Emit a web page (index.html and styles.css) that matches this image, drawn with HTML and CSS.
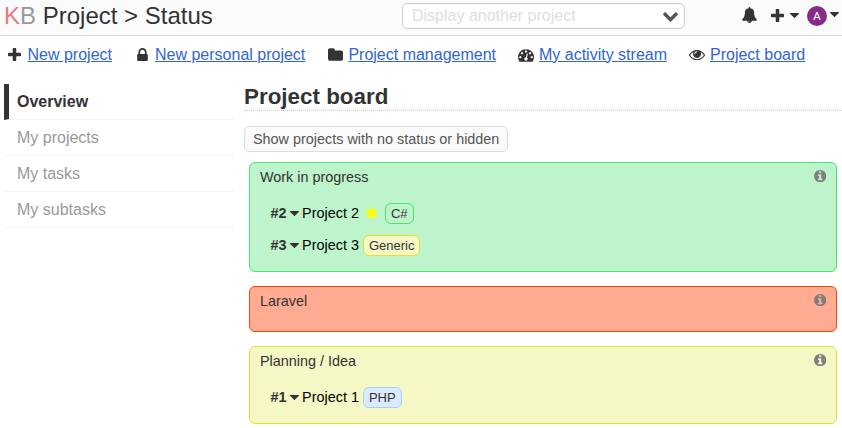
FILE: index.html
```html
<!DOCTYPE html>
<html lang="en">
<head>
<meta charset="utf-8">
<title>Project &gt; Status</title>
<link rel="stylesheet" href="styles.css">
</head>
<body>
<svg class="sprite" aria-hidden="true">
  <symbol id="plus" viewBox="192 128 1408 1408"><path d="M1600 736v192q0 40-28 68t-68 28h-416v416q0 40-28 68t-68 28h-192q-40 0-68-28t-28-68v-416h-416q-40 0-68-28t-28-68v-192q0-40 28-68t68-28h416v-416q0-40 28-68t68-28h192q40 0 68 28t28 68v416h416q40 0 68 28t28 68z"/></symbol>
  <symbol id="lock" viewBox="320 128 1152 1408"><path d="M640 768h512v-192q0-106-75-181t-181-75-181 75-75 181v192zm832 96v576q0 40-28 68t-68 28h-960q-40 0-68-28t-28-68v-576q0-40 28-68t68-28h32v-192q0-184 132-316t316-132 316 132 132 316v192h32q40 0 68 28t28 68z"/></symbol>
  <symbol id="folder" viewBox="64 128 1664 1408"><path d="M1728 608v704q0 92-66 158t-158 66h-1216q-92 0-158-66t-66-158v-960q0-92 66-158t158-66h320q92 0 158 66t66 158v32h672q92 0 158 66t66 158z"/></symbol>
  <symbol id="gauge" viewBox="0 256 1792 1408"><path d="M384 1152q0-53-37.5-90.5t-90.5-37.5-90.5 37.5-37.5 90.5 37.5 90.5 90.5 37.5 90.5-37.5 37.5-90.5zm192-448q0-53-37.5-90.5t-90.5-37.5-90.5 37.5-37.5 90.5 37.5 90.5 90.5 37.5 90.5-37.5 37.5-90.5zm428 481l101-382q6-26-7.500-48.500t-38.500-29.500-48 6.500-30 39.500l-101 382q-60 5-107 43.500t-63 98.500q-20 77 20 146t117 89 146-20 89-117q16-60-6-117t-72-91zm660-33q0-53-37.500-90.500t-90.500-37.500-90.500 37.500-37.500 90.500 37.500 90.500 90.500 37.500 90.500-37.500 37.500-90.500zm-640-640q0-53-37.500-90.500t-90.500-37.500-90.500 37.500-37.500 90.500 37.500 90.500 90.500 37.500 90.500-37.500 37.500-90.500zm448 192q0-53-37.500-90.500t-90.500-37.500-90.500 37.500-37.500 90.500 37.500 90.500 90.500 37.500 90.500-37.500 37.500-90.500zm320 448q0 261-141 483-19 29-54 29h-1402q-35 0-54-29-141-221-141-483 0-182 71-348t191-286 286-191 348-71 348 71 286 191 191 286 71 348z"/></symbol>
  <symbol id="eye" viewBox="0 384 1792 1152"><path d="M1664 960q-152-236-381-353 61 104 61 225 0 185-131.500 316.500t-316.500 131.500-316.500-131.500-131.500-316.500q0-121 61-225-229 117-381 353 133 205 333.500 326.500t434.500 121.500 434.500-121.500 333.500-326.500zm-720-384q0-20-14-34t-34-14q-125 0-214.500 89.500t-89.500 214.500q0 20 14 34t34 14 34-14 14-34q0-86 61-147t147-61q20 0 34-14t14-34zm848 384q0 34-20 69-140 230-376.500 368.500t-499.500 138.500-499.500-139-376.500-368q-20-35-20-69t20-69q140-229 376.500-368t499.500-139 499.500 139 376.500 368q20 35 20 69z"/></symbol>
  <symbol id="bell" viewBox="64 0 1664 1792"><path d="M912 1696q0-16-16-16-59 0-101.500-42.500t-42.500-101.500q0-16-16-16t-16 16q0 73 51.500 124.500t124.500 51.500q16 0 16-16zm816-288q0 52-38 90t-90 38h-448q0 106-75 181t-181 75-181-75-75-181h-448q-52 0-90-38t-38-90q50-42 91-88t85-119.500 74.500-158.500 50-206 19.500-260q0-152 117-282.500t307-158.500q-8-19-8-39 0-40 28-68t68-28 68 28 28 68q0 20-8 39 190 28 307 158.500t117 282.500q0 139 19.500 260t50 206 74.500 158.500 85 119.500 91 88z"/></symbol>
  <symbol id="chevron" viewBox="90 533 1612 1035"><path d="M1683 808l-742 741q-19 19-45 19t-45-19l-742-741q-19-19-19-45.500t19-45.500l166-165q19-19 45-19t45 19l531 531 531-531q19-19 45-19t45 19l166 165q19 19 19 45.500t-19 45.500z"/></symbol>
  <symbol id="star" viewBox="64 32 1664 1587"><path d="M1728 647q0 22-26 48l-363 354 86 500q1 7 1 20 0 21-10.500 35.500t-30.500 14.500q-19 0-40-12l-449-236-449 236q-22 12-40 12-21 0-31.500-14.500t-10.500-35.500q0-6 2-20l86-500-364-354q-25-27-25-48 0-37 56-46l502-73 225-455q19-41 49-41t49 41l225 455 502 73q56 9 56 46z"/></symbol>
  <symbol id="info" viewBox="128 128 1536 1536"><path d="M1152 1376v-160q0-14-9-23t-23-9h-96v-512q0-14-9-23t-23-9h-320q-14 0-23 9t-9 23v160q0 14 9 23t23 9h96v320h-96q-14 0-23 9t-9 23v160q0 14 9 23t23 9h448q14 0 23-9t9-23zm-128-896v-160q0-14-9-23t-23-9h-192q-14 0-23 9t-9 23v160q0 14 9 23t23 9h192q14 0 23-9t9-23zm640 416q0 209-103 385.500t-279.500 279.500-385.500 103-385.500-103-279.500-279.500-103-385.500 103-385.500 279.500-279.500 385.500-103 385.500 103 279.500 279.500 103 385.500z"/></symbol>
  <symbol id="caret" viewBox="384 640 1024 576"><path d="M1408 704q0 26-19 45l-448 448q-19 19-45 19t-45-19l-448-448q-19-19-19-45t19-45 45-19h896q26 0 45 19t19 45z"/></symbol>
</svg>

<header class="top">
  <h1 class="title"><span class="logo"><span class="logo-k">K</span>B</span> Project &gt; Status</h1>
  <div class="select"><span>Display another project</span><svg class="i-chevron"><use href="#chevron"/></svg></div>
  <div class="tools">
    <svg class="i-bell"><use href="#bell"/></svg>
    <svg class="i-plus"><use href="#plus"/></svg>
    <svg class="i-caret"><use href="#caret"/></svg>
    <span class="avatar">A</span>
    <svg class="i-caret user-caret"><use href="#caret"/></svg>
  </div>
</header>

<nav class="actions">
  <div class="action new"><svg class="i-plus"><use href="#plus"/></svg><a href="#">New project</a></div>
  <div class="action personal"><svg class="i-lock"><use href="#lock"/></svg><a href="#">New personal project</a></div>
  <div class="action manage"><svg class="i-folder"><use href="#folder"/></svg><a href="#">Project management</a></div>
  <div class="action stream"><svg class="i-gauge"><use href="#gauge"/></svg><a href="#">My activity stream</a></div>
  <div class="action board"><svg class="i-eye"><use href="#eye"/></svg><a href="#">Project board</a></div>
</nav>

<div class="page">
  <ul class="sidebar">
    <li class="active">Overview</li>
    <li>My projects</li>
    <li>My tasks</li>
    <li>My subtasks</li>
  </ul>
  <main class="content">
    <h2>Project board</h2>
    <button class="toggle" type="button">Show projects with no status or hidden</button>
    <section class="card green">
      <div class="card-head"><span>Work in progress</span><svg class="i-info"><use href="#info"/></svg></div>
      <div class="project"><b>#2</b><svg class="i-caret"><use href="#caret"/></svg><span class="name">Project 2</span><svg class="i-star"><use href="#star"/></svg><span class="tag tag-green">C#</span></div>
      <div class="project"><b>#3</b><svg class="i-caret"><use href="#caret"/></svg><span class="name">Project 3</span><span class="tag tag-yellow">Generic</span></div>
    </section>
    <section class="card red">
      <div class="card-head"><span>Laravel</span><svg class="i-info"><use href="#info"/></svg></div>
    </section>
    <section class="card yellow">
      <div class="card-head"><span>Planning / Idea</span><svg class="i-info"><use href="#info"/></svg></div>
      <div class="project"><b>#1</b><svg class="i-caret"><use href="#caret"/></svg><span class="name">Project 1</span><span class="tag tag-blue">PHP</span></div>
    </section>
  </main>
</div>
</body>
</html>
```
FILE: styles.css
```css
* { box-sizing: border-box; }
body {
  margin: 0;
  height: 428px;
  overflow: hidden;
  background: #fff;
  color: #333;
  font: 16px "Liberation Sans", Arial, sans-serif;
}
svg { display: block; flex: none; fill: currentColor; }
.sprite { width: 0; height: 0; position: absolute; }

.i-plus { width: 13px; height: 13px; }
.i-lock { width: 11px; height: 13px; }
.i-folder { width: 15px; height: 13px; }
.i-gauge { width: 16px; height: 13px; margin-top: 1px; }
.i-eye { width: 16px; height: 10.300px; margin-top: 2px; }
.i-bell { width: 15px; height: 16px; margin-bottom: 1px; }
.i-caret { width: 9px; height: 5px; }
.i-chevron { width: 15px; height: 10px; margin-top: 2px; color: #555; }
.i-star { width: 13px; height: 13px; color: #ff0; }
.i-info { width: 12.400px; height: 12.400px; color: #808080; }

.top {
  display: flex;
  height: 36px;
  background: #fbfbfb;
  border-bottom: 1px solid #dedede;
}
.title {
  width: 402px;
  margin: 0;
  padding-left: 4px;
  font-size: 24px;
  font-weight: 400;
  line-height: 32px;
  white-space: nowrap;
}
.logo { color: #999; }
.logo-k { color: #e97a7e; }
.select {
  display: flex;
  align-items: center;
  justify-content: space-between;
  width: 283px;
  height: 26px;
  margin-top: 3px;
  padding: 0 6px 0 9px;
  background: #fff;
  border: 1px solid #ccc;
  border-radius: 5px;
  color: #dedede;
}
.tools { display: flex; align-items: center; height: 31px; margin-left: 56.500px; }
.tools .i-plus { margin: 0 6px 1px 14px; }
.avatar {
  width: 20px;
  height: 20px;
  margin: 1px 3px 0 8.500px;
  border-radius: 50%;
  background: #872c86;
  color: #fff;
  font-size: 11px;
  line-height: 20px;
  text-align: center;
}
.user-caret { margin-bottom: 2px; }

.actions { display: flex; height: 37px; padding-left: 8px; }
.action { display: flex; align-items: center; height: 37px; }
.action a { color: #36c; line-height: 18px; }
.new { width: 128.500px; gap: 6.500px; }
.new .i-plus { margin-bottom: 1px; }
.personal { width: 191.500px; gap: 7.500px; }
.i-lock, .i-folder { margin-bottom: 1px; }
.manage { width: 190px; gap: 5.400px; }
.stream { width: 171px; gap: 5px; }
.board { gap: 5px; }

.page { display: flex; padding-top: 11px; }
.sidebar { width: 229px; margin: 0 11px 0 4px; padding: 0; list-style: none; flex: none; }
.sidebar li {
  height: 36px;
  padding-left: 13px;
  border-bottom: 1px dotted #e8e8e8;
  color: #999;
  line-height: 35px;
}
.sidebar .active {
  padding-left: 8px;
  border-left: 5px solid #333;
  color: #333;
  font-weight: 700;
}
.content { flex: 1; }
h2 {
  height: 27px;
  margin: 0 0 15px;
  border-bottom: 1px dotted #ccc;
  font-size: 22.400px;
  line-height: 25px;
}
.toggle {
  display: block;
  height: 26px;
  margin: 0 0 10px;
  padding: 0 8px;
  background: #fafafa;
  border: 1px solid #ddd;
  border-radius: 5px;
  color: #555;
  font: 14.400px "Liberation Sans", Arial, sans-serif;
}
.card {
  margin: 0 5px 14px;
  padding: 5px 10px 10px;
  border: 1px solid;
  border-radius: 6px;
  font-size: 14.400px;
}
.green { height: 110px; background: #bdf4cb; border-color: #4ae371; }
.red { height: 46px; background: #ffac93; border-color: #f04513; }
.yellow { height: 78px; background: #f5f7c4; border-color: #dfe32d; }
.card-head { display: flex; justify-content: space-between; height: 29px; line-height: 18px; }
.card-head .i-info { margin-top: 1.700px; }
.project { display: flex; align-items: center; height: 32px; padding-left: 10.600px; }
.project .i-caret { margin: 0 3px 0 3.500px; }
.name { color: #000; }
.i-star { margin: 0 3px 1px 6px; }
.tag {
  height: 21px;
  margin-left: 4px;
  padding: 0 5px;
  border: 1px solid;
  border-radius: 6px;
  color: #333;
  font-size: 13px;
  line-height: 19px;
}
.tag-green { border-color: #4ae371; }
.tag-yellow { background: #f5f7c4; border-color: #dfe32d; }
.tag-blue { background: #dbebff; border-color: #a8cfff; }
```
